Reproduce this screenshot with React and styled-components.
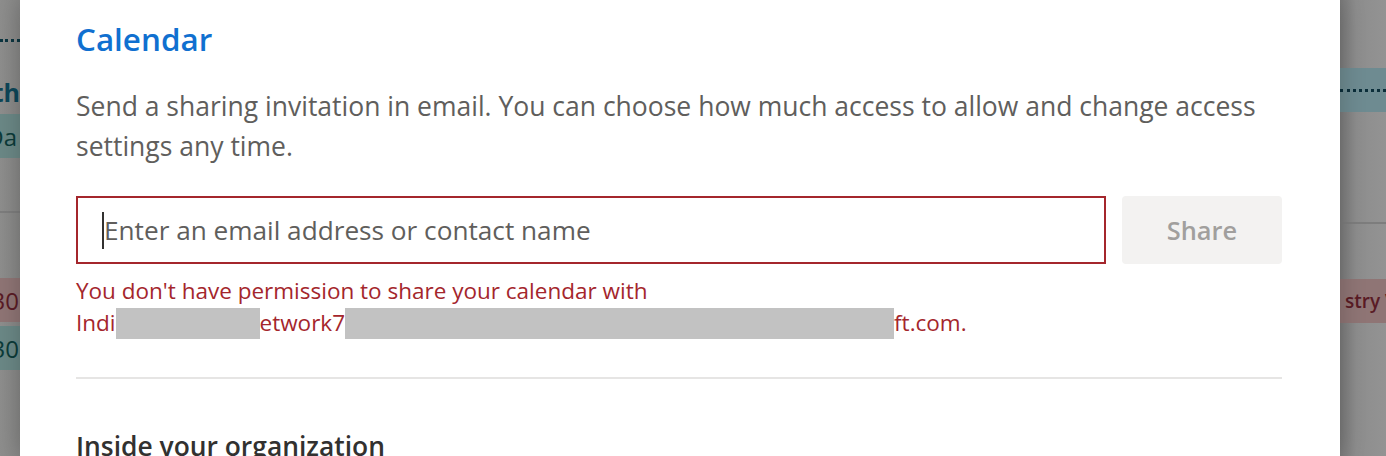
import React from 'react'
import styled, { createGlobalStyle } from 'styled-components'

const GlobalStyle = createGlobalStyle`
  html, body {
    margin: 0;
    padding: 0;
    overflow: hidden;
  }
  body {
    font-family: "Segoe UI", "Open Sans", "Noto Sans", sans-serif;
    background: #8b8b8b;
  }
`

const Screen = styled.div`
  display: flex;
  width: 1386px;
  height: 456px;
  overflow: hidden;
`

const Backdrop = styled.div`
  flex: 0 0 ${p => p.$width}px;
  display: flex;
  flex-direction: column;
  overflow: hidden;
  background: ${p => p.$side === 'left'
    ? 'linear-gradient(to right, #8e8e8d, #878786)'
    : 'linear-gradient(to right, #7b7b7b, #8d8d8d 35%, #939393)'};
`

const Dots = styled.div`
  margin-top: ${p => p.$gap}px;
  height: 0;
  border-top: 3px dotted #0c3540;
`

const BgText = styled.div`
  margin-top: ${p => p.$gap}px;
  display: flex;
  justify-content: flex-end;
  height: 28px;
  line-height: 28px;
  font-size: 25px;
  font-weight: 700;
  color: #0d4658;
  white-space: nowrap;
  span { flex-shrink: 0; }
`

const Block = styled.div`
  margin-top: ${p => p.$gap}px;
  height: 44px;
  display: flex;
  align-items: center;
  justify-content: ${p => p.$side === 'right' ? 'flex-start' : 'flex-end'};
  padding: ${p => p.$side === 'right' ? '0 0 0 5px' : `0 ${p.$pad || 1}px 0 0`};
  background: ${p => ({ teal: '#6b8886', red: '#8f7575', sky: '#6e8b91' })[p.$tone]};
  color: ${p => p.$tone === 'red' ? '#5a1b25' : '#0c3b39'};
  font-size: ${p => p.$side === 'right' ? 19 : 24}px;
  font-weight: ${p => p.$side === 'right' ? 600 : 400};
  white-space: nowrap;
  span { flex-shrink: 0; }
`

const InnerDots = styled.div`
  flex: 1;
  height: 0;
  margin-left: -5px;
  border-top: 3px dotted #0b2e3a;
`

const Rule = styled.div`
  margin-top: ${p => p.$gap}px;
  height: 2px;
  background: ${p => p.$light ? '#e6e5e4' : '#7d7d7d'};
`

const Dialog = styled.section`
  flex: 0 0 1320px;
  box-sizing: border-box;
  background: #ffffff;
  padding: 19px 58px 0 56px;
  box-shadow: 0 0 24px rgba(0, 0, 0, 0.22);
  z-index: 1;
`

const Title = styled.h2`
  margin: 0;
  font-size: 31.4px;
  line-height: 40px;
  font-weight: 600;
  color: #1070d0;
`

const Lead = styled.p`
  margin: 27px 0 0;
  font-size: 26.5px;
  line-height: 40px;
  color: #605e5c;
`

const ShareRow = styled.div`
  display: flex;
  gap: 16px;
  margin-top: 30px;
`

const EmailBox = styled.div`
  flex: 1;
  height: 68px;
  box-sizing: border-box;
  border: 2px solid #a4262c;
  display: flex;
  align-items: center;
  padding-left: 24px;
`

const Caret = styled.span`
  width: 2px;
  height: 37px;
  background: #323130;
  flex-shrink: 0;
`

const Placeholder = styled.span`
  font-size: 26.2px;
  color: #605e5c;
  white-space: nowrap;
`

const ShareButton = styled.button`
  flex: 0 0 160px;
  height: 68px;
  border: none;
  border-radius: 4px;
  background: #f3f2f1;
  color: #a19f9d;
  font-family: inherit;
  font-size: 25.4px;
  font-weight: 600;
  padding: 0;
`

const ErrorText = styled.div`
  margin-top: 11px;
  font-size: 22.5px;
  line-height: 32px;
  color: #a4262c;
`

const Redacted = styled.span`
  display: inline-block;
  width: ${p => p.$w}px;
  height: 31px;
  background: #c2c2c2;
  vertical-align: -8px;
`

const SectionHeading = styled.h3`
  margin: 51px 0 0;
  font-size: 26.4px;
  line-height: 32px;
  font-weight: 600;
  color: #323130;
`

export default function App() {
  return (
    <Screen>
      <GlobalStyle />
      <Backdrop $side="left" $width={20}>
        <Dots $gap={39} />
        <BgText $gap={36}><span>-th</span></BgText>
        <Block $tone="teal" $gap={8} $pad={3}><span>Da</span></Block>
        <Rule $gap={53} />
        <Block $tone="red" $gap={65}><span>30</span></Block>
        <Block $tone="teal" $gap={4}><span>30</span></Block>
      </Backdrop>

      <Dialog>
        <Title>Calendar</Title>
        <Lead>
          Send a sharing invitation in email. You can choose how much access to allow and change access<br />
          settings any time.
        </Lead>
        <ShareRow>
          <EmailBox>
            <Caret />
            <Placeholder>Enter an email address or contact name</Placeholder>
          </EmailBox>
          <ShareButton disabled>Share</ShareButton>
        </ShareRow>
        <ErrorText>
          You don't have permission to share your calendar with<br />
          Indi<Redacted $w={144} />etwork7<Redacted $w={549} />ft.com.
        </ErrorText>
        <Rule $gap={38} $light />
        <SectionHeading>Inside your organization</SectionHeading>
      </Dialog>

      <Backdrop $side="right" $width={46}>
        <Block $tone="sky" $side="right" $gap={68}><InnerDots /></Block>
        <Rule $gap={110} />
        <Block $tone="red" $side="right" $gap={55}><span>stry V</span></Block>
      </Backdrop>
    </Screen>
  )
}
